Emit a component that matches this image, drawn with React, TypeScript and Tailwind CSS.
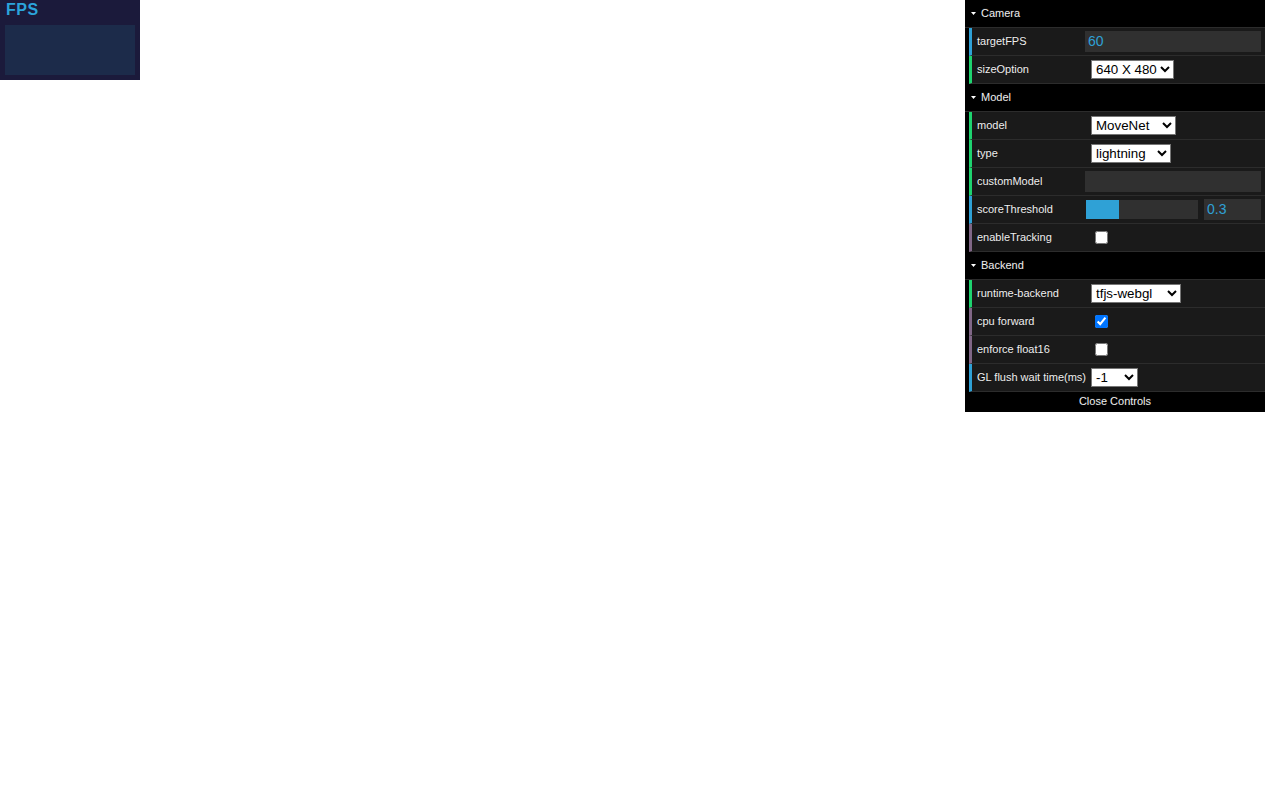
import React from "react"

type Kind = "number" | "string" | "boolean"

const borderFor: Record<Kind, string> = {
  number: "border-l-[#2FA1D6]",
  string: "border-l-[#1ed36f]",
  boolean: "border-l-[#806787]",
}

const font = { fontFamily: '"Liberation Sans", Arial, sans-serif' }

function FolderTitle({ name }: { name: string }) {
  return (
    <div className="flex h-[28px] items-center border-b border-[#2c2c2c] bg-black text-[11px] text-[#eee] [text-shadow:0_-1px_0_#111]">
      <svg className="ml-[6px] mr-[5px]" width="5" height="3" viewBox="0 0 5 3">
        <path d="M0 0h5L2.5 3z" fill="#fff" />
      </svg>
      <span>{name}</span>
    </div>
  )
}

function Row({ label, kind, children }: { label: string; kind: Kind; children?: React.ReactNode }) {
  return (
    <div className="bg-black pl-[4px]">
      <div
        className={
          "flex h-[28px] items-center border-b border-l-[3px] border-b-[#2c2c2c] bg-[#1a1a1a] pl-[5px] pr-[4px] " +
          borderFor[kind]
        }
      >
        <div className="w-[108px] shrink-0 whitespace-nowrap text-[11px] text-[#eee] [text-shadow:0_-1px_0_#111]">
          {label}
        </div>
        <div className="flex flex-1 items-center">{children}</div>
      </div>
    </div>
  )
}

function Select({ value, options, width }: { value: string; options: string[]; width: string }) {
  return (
    <select
      defaultValue={value}
      className={"ml-[6px] h-[19px] border border-[#767676] bg-white text-[13.33px] text-black " + width}
      style={font}
    >
      {options.map((o) => (
        <option key={o}>{o}</option>
      ))}
    </select>
  )
}

function Check({ checked }: { checked?: boolean }) {
  return <input type="checkbox" defaultChecked={checked} className="ml-[10px] h-[13px] w-[13px]" />
}

export default function App() {
  return (
    <div className="relative h-[800px] w-full bg-white" style={font}>
      {/* stats panel */}
      <div className="absolute left-0 top-0 h-[80px] w-[140px] bg-[#1b1a3b] pl-[5px] pt-[2px]">
        <div className="ml-[1px] text-[16px] font-bold leading-[15px] tracking-[0.5px] text-[#2ba4dc]">FPS</div>
        <div className="mt-[8px] h-[50px] w-[130px] bg-[#1c2b4a]" />
      </div>

      {/* controls */}
      <div className="absolute right-[15px] top-0 w-[300px]">
        <FolderTitle name="Camera" />
        <Row label="targetFPS" kind="number">
          <input
            defaultValue="60"
            className="h-[21px] w-[176px] bg-[#303030] px-[3px] text-[14px] text-[#2FA1D6] outline-none"
          />
        </Row>
        <Row label="sizeOption" kind="string">
          <Select value="640 X 480" options={["640 X 480", "640 X 360", "360 X 270"]} width="w-[83px]" />
        </Row>

        <FolderTitle name="Model" />
        <Row label="model" kind="string">
          <Select value="MoveNet" options={["MoveNet", "BlazePose", "PoseNet"]} width="w-[85px]" />
        </Row>
        <Row label="type" kind="string">
          <Select value="lightning" options={["lightning", "thunder", "multipose"]} width="w-[80px]" />
        </Row>
        <Row label="customModel" kind="string">
          <input className="h-[21px] w-[176px] bg-[#303030] px-[3px] text-[14px] text-[#1ed36f] outline-none" />
        </Row>
        <Row label="scoreThreshold" kind="number">
          <div className="ml-[1px] h-[19px] w-[112px] bg-[#303030]">
            <div className="h-full w-[33px] bg-[#2FA1D6]" />
          </div>
          <input
            defaultValue="0.3"
            className="ml-[6px] h-[21px] w-[57px] bg-[#303030] px-[3px] text-[14px] text-[#2FA1D6] outline-none"
          />
        </Row>
        <Row label="enableTracking" kind="boolean">
          <Check />
        </Row>

        <FolderTitle name="Backend" />
        <Row label="runtime-backend" kind="string">
          <Select value="tfjs-webgl" options={["tfjs-webgl", "tfjs-wasm"]} width="w-[90px]" />
        </Row>
        <Row label="cpu forward" kind="boolean">
          <Check checked />
        </Row>
        <Row label="enforce float16" kind="boolean">
          <Check />
        </Row>
        <Row label="GL flush wait time(ms)" kind="number">
          <Select value="-1" options={["-1", "0", "1"]} width="w-[47px]" />
        </Row>

        <div className="h-[20px] bg-black text-center text-[11px] leading-[19px] text-[#eee] [text-shadow:0_-1px_0_#111]">
          Close Controls
        </div>
      </div>
    </div>
  )
}
